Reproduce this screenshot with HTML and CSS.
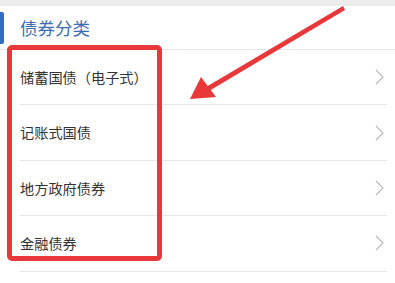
FILE: index.html
```html
<!DOCTYPE html>
<html lang="zh-CN">
<head>
<meta charset="utf-8">
<link rel="stylesheet" href="styles.css">
</head>
<body>
<div class="page">
  <div class="topbar"></div>
  <div class="header">
    <span class="accent"></span>
    <span class="title">债券分类</span>
  </div>
  <ul class="list">
    <li class="row"><span class="label">储蓄国债（电子式）</span><svg class="chev" width="9" height="16" viewBox="0 0 9 16"><path d="M1 1 L8 8 L1 15" fill="none" stroke="#b8b8b8" stroke-width="1.1"/></svg></li>
    <li class="row"><span class="label">记账式国债</span><svg class="chev" width="9" height="16" viewBox="0 0 9 16"><path d="M1 1 L8 8 L1 15" fill="none" stroke="#b8b8b8" stroke-width="1.1"/></svg></li>
    <li class="row"><span class="label">地方政府债券</span><svg class="chev" width="9" height="16" viewBox="0 0 9 16"><path d="M1 1 L8 8 L1 15" fill="none" stroke="#b8b8b8" stroke-width="1.1"/></svg></li>
    <li class="row"><span class="label">金融债券</span><svg class="chev" width="9" height="16" viewBox="0 0 9 16"><path d="M1 1 L8 8 L1 15" fill="none" stroke="#b8b8b8" stroke-width="1.1"/></svg></li>
  </ul>
  <div class="highlight"></div>
  <svg class="arrow" width="395" height="283" viewBox="0 0 395 283">
    <polygon points="343,6 345,10 209,91 206,87" fill="#e8383a"/>
    <polygon points="190,99 201,77 216,97" fill="#e8383a"/>
  </svg>
</div>
</body>
</html>
```
FILE: styles.css
```css
html, body {
  margin: 0;
  padding: 0;
  background: #ffffff;
}
.page {
  position: relative;
  width: 395px;
  height: 283px;
  overflow: hidden;
  font-family: "Noto Sans CJK SC", "Noto Sans", sans-serif;
}
.topbar {
  height: 6px;
  background: #ececec;
}
.header {
  height: 43px;
  display: flex;
  align-items: center;
  border-bottom: 1px solid #e6e6e6;
}
.accent {
  width: 4px;
  height: 32px;
  background: #2f6cc2;
  border-radius: 0 2px 2px 0;
}
.title {
  margin-left: 16px;
  font-size: 17.5px;
  color: #3b6cb4;
  line-height: 1;
}
.list {
  list-style: none;
  margin: 0 8px 0 20px;
  padding: 0;
}
.row {
  height: 54.4px;
  display: flex;
  align-items: center;
  justify-content: space-between;
  border-bottom: 1px solid #e6e6e6;
}
.label {
  font-size: 14.2px;
  color: #333333;
  line-height: 1;
}
.chev {
  margin-right: 3px;
}
.highlight {
  position: absolute;
  left: 7px;
  top: 45px;
  width: 145px;
  height: 206px;
  border: 5.5px solid #e8383a;
  border-radius: 5px;
}
.arrow {
  position: absolute;
  left: 0;
  top: 0;
}
```
